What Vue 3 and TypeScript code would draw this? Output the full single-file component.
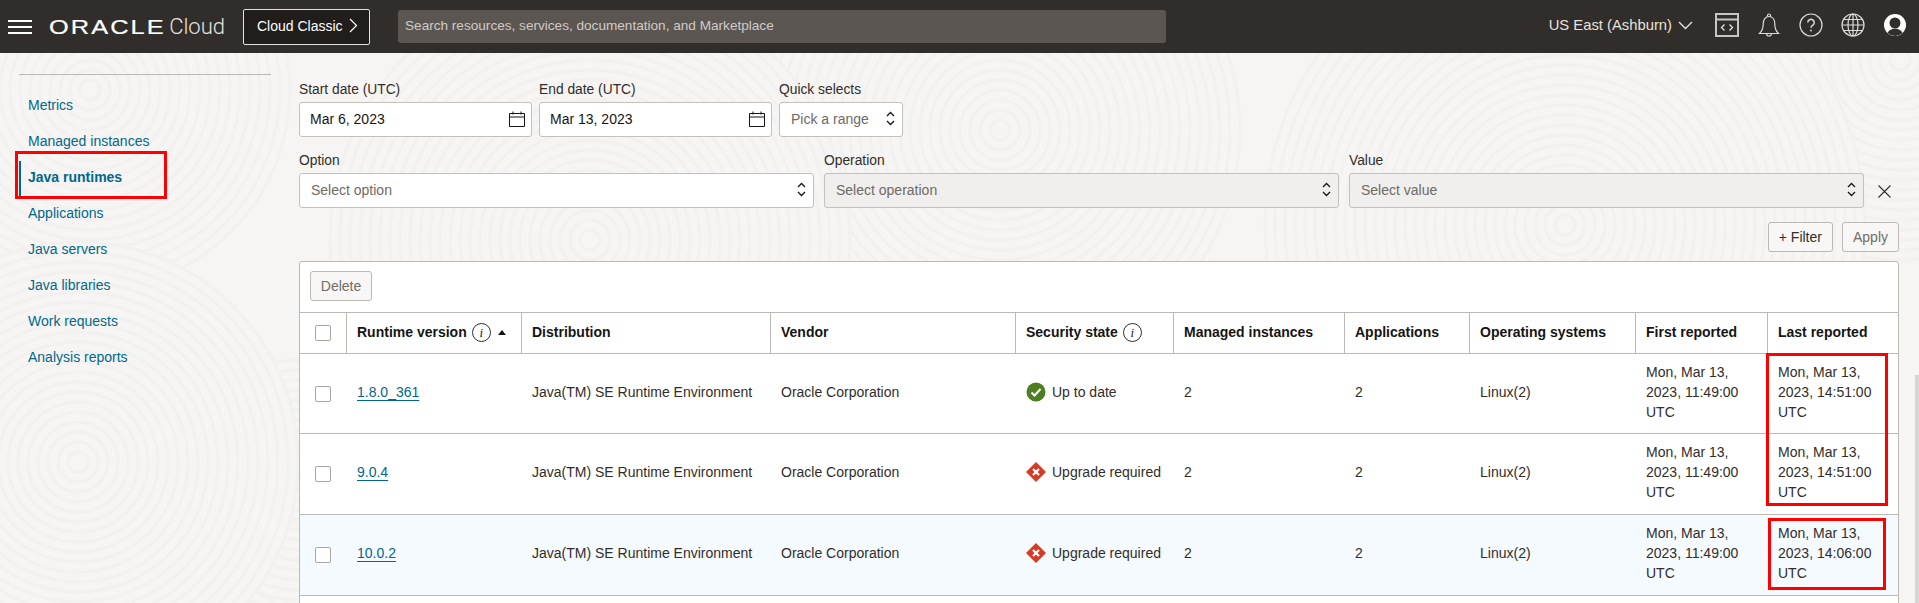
<script setup lang="ts">
interface Runtime {
  version: string
  upToDate: boolean
  last: string
  active?: boolean
}

const navItems = [
  'Metrics',
  'Managed instances',
  'Java runtimes',
  'Applications',
  'Java servers',
  'Java libraries',
  'Work requests',
  'Analysis reports',
]

const columnWidths = [47, 175, 249, 245, 158, 171, 125, 166, 132, 130]

const runtimes: Runtime[] = [
  { version: '1.8.0_361', upToDate: true, last: 'Mon, Mar 13, 2023, 14:51:00 UTC' },
  { version: '9.0.4', upToDate: false, last: 'Mon, Mar 13, 2023, 14:51:00 UTC' },
  { version: '10.0.2', upToDate: false, last: 'Mon, Mar 13, 2023, 14:06:00 UTC', active: true },
]

// overlapping fingerprint patches for the page texture, later ones cover earlier ones
const ringSets = [
  { cx: 1900, cy: 60, count: 20 },
  { cx: 1000, cy: 130, count: 24 },
  { cx: 90, cy: 90, count: 20 },
  { cx: 240, cy: 640, count: 18 },
  { cx: 300, cy: 480, count: 12 },
  { cx: 78, cy: 462, count: 22 },
  { cx: 590, cy: 240, count: 26 },
  { cx: 1565, cy: 225, count: 30 },
]
</script>

<template>
  <div class="page">
    <svg class="texture" width="1919" height="603" fill="none" stroke="#f2f1ef" stroke-width="3">
      <g v-for="set in ringSets" :key="set.cx">
        <circle :cx="set.cx" :cy="set.cy" :r="set.count * 10" fill="#f6f5f3" stroke="none" />
        <circle
          v-for="n in set.count"
          :key="n"
          :cx="set.cx"
          :cy="set.cy"
          :r="n * 10"
        />
      </g>
    </svg>

    <header class="topbar">
      <button class="burger" title="Menu"><span></span><span></span><span></span></button>
      <div class="logo">
        <span class="logo-oracle">ORACLE</span>
        <span class="logo-cloud">Cloud</span>
      </div>
      <button class="classic">
        Cloud Classic
        <svg width="9" height="15" viewBox="0 0 9 15" fill="none" stroke="#fff" stroke-width="1.2"><path d="M1 1l6.5 6.5L1 14" /></svg>
      </button>
      <div class="search">Search resources, services, documentation, and Marketplace</div>
      <div class="region">
        US East (Ashburn)
        <svg width="15" height="9" viewBox="0 0 15 9" fill="none" stroke="#e6e3df" stroke-width="1.4"><path d="M1 1l6.5 6.5L14 1" /></svg>
      </div>
      <div class="tools">
        <svg width="24" height="24" viewBox="0 0 24 24" fill="none" stroke="#c9c6c2" stroke-width="2">
          <rect x="1" y="1" width="22" height="22" />
          <path d="M1 6.5h22" />
          <path d="M9.5 11.5l-3 3 3 3M14.5 11.5l3 3-3 3" stroke="#e6e3df" stroke-width="1.3" />
        </svg>
        <svg width="24" height="24" viewBox="0 0 24 24" fill="none" stroke="#dedbd7" stroke-width="1.2">
          <path d="M2.5 20.5c2.7-2.5 3.7-5 3.7-9.500 0-4.500 2.300-7.500 5.800-7.500s5.800 3 5.800 7.500c0 4.500 1 7 3.700 9.500z" />
          <path d="M10.5 3.500v-1a1.500 1.500 0 0 1 3 0v1M9.500 20.500a2.500 2.500 0 0 0 5 0" />
        </svg>
        <svg width="24" height="24" viewBox="0 0 24 24" fill="none" stroke="#dedbd7" stroke-width="1.2">
          <circle cx="12" cy="12" r="11" />
          <path d="M8.8 9.500a3.200 3.200 0 1 1 4.800 2.800c-1 .6-1.600 1.200-1.600 2.400" stroke-width="1.5" />
          <circle cx="12" cy="17.5" r=".9" fill="#dedbd7" stroke="none" />
        </svg>
        <svg width="24" height="24" viewBox="0 0 24 24" fill="none" stroke="#dedbd7" stroke-width="1.2">
          <circle cx="12" cy="12" r="11" />
          <ellipse cx="12" cy="12" rx="5" ry="11" />
          <path d="M12 1v22M1 12h22M2.5 6.500h19M2.500 17.500h19" />
        </svg>
        <svg width="24" height="24" viewBox="0 0 24 24">
          <circle cx="12" cy="12" r="11" fill="#fff" />
          <circle cx="12" cy="10" r="5.5" fill="#312d2a" />
          <path d="M4.5 20c1.500-3 4-4.200 7.500-4.200s6 1.200 7.500 4.200a11 11 0 0 1-15 0z" fill="#312d2a" />
        </svg>
      </div>
    </header>

    <div class="body">
      <nav class="sidebar">
        <a
          v-for="item in navItems"
          :key="item"
          class="nav-item"
          :class="{ selected: item === 'Java runtimes' }"
        >{{ item }}</a>
        <div class="mark mark-nav"></div>
      </nav>

      <main class="content">
        <div class="filter-row dates">
          <label class="field date">
            <span class="field-label">Start date (UTC)</span>
            <div class="control">
              <span class="value">Mar 6, 2023</span>
              <svg width="16" height="16" viewBox="0 0 16 16" fill="none" stroke="#161513"><path d="M.5 2.5h15v13H.5zM.5 6h15M4 .5v3M12 .5v3" /></svg>
            </div>
          </label>
          <label class="field date">
            <span class="field-label">End date (UTC)</span>
            <div class="control">
              <span class="value">Mar 13, 2023</span>
              <svg width="16" height="16" viewBox="0 0 16 16" fill="none" stroke="#161513"><path d="M.5 2.5h15v13H.5zM.5 6h15M4 .5v3M12 .5v3" /></svg>
            </div>
          </label>
          <label class="field quick">
            <span class="field-label">Quick selects</span>
            <div class="control">
              <span class="placeholder">Pick a range</span>
              <svg class="updown" width="9" height="15" viewBox="0 0 9 15" fill="none" stroke="#161513" stroke-width="1.3"><path d="M1 5l3.500-3.500L8 5M1 10l3.500 3.500L8 10" /></svg>
            </div>
          </label>
        </div>

        <div class="filter-row wide">
          <label class="field">
            <span class="field-label">Option</span>
            <div class="control">
              <span class="placeholder">Select option</span>
              <svg class="updown" width="9" height="15" viewBox="0 0 9 15" fill="none" stroke="#161513" stroke-width="1.3"><path d="M1 5l3.500-3.500L8 5M1 10l3.500 3.500L8 10" /></svg>
            </div>
          </label>
          <label class="field">
            <span class="field-label">Operation</span>
            <div class="control disabled">
              <span class="placeholder">Select operation</span>
              <svg class="updown" width="9" height="15" viewBox="0 0 9 15" fill="none" stroke="#161513" stroke-width="1.3"><path d="M1 5l3.500-3.500L8 5M1 10l3.500 3.500L8 10" /></svg>
            </div>
          </label>
          <label class="field">
            <span class="field-label">Value</span>
            <div class="control disabled">
              <span class="placeholder">Select value</span>
              <svg class="updown" width="9" height="15" viewBox="0 0 9 15" fill="none" stroke="#161513" stroke-width="1.3"><path d="M1 5l3.500-3.500L8 5M1 10l3.500 3.500L8 10" /></svg>
            </div>
          </label>
          <svg class="remove" width="13" height="13" viewBox="0 0 13 13" stroke="#312d2a" stroke-width="1.1"><path d="M.5.5l12 12M12.5.5l-12 12" /></svg>
        </div>

        <div class="filter-actions">
          <button class="btn">+ Filter</button>
          <button class="btn off">Apply</button>
        </div>

        <section class="card">
          <div class="toolbar"><button class="btn off delete">Delete</button></div>
          <table>
            <colgroup>
              <col v-for="(w, i) in columnWidths" :key="i" :style="{ width: w + 'px' }" />
            </colgroup>
            <thead>
              <tr>
                <th><span class="check"></span></th>
                <th>
                  <div class="th-inner">Runtime version <i class="info">i</i><span class="sort"></span></div>
                </th>
                <th>Distribution</th>
                <th>Vendor</th>
                <th><div class="th-inner">Security state <i class="info">i</i></div></th>
                <th>Managed instances</th>
                <th>Applications</th>
                <th>Operating systems</th>
                <th>First reported</th>
                <th>Last reported</th>
              </tr>
            </thead>
            <tbody>
              <tr v-for="r in runtimes" :key="r.version" :class="{ active: r.active }">
                <td><span class="check"></span></td>
                <td><a class="link">{{ r.version }}</a></td>
                <td>Java(TM) SE Runtime Environment</td>
                <td>Oracle Corporation</td>
                <td>
                  <div class="state">
                    <svg v-if="r.upToDate" width="20" height="20" viewBox="0 0 20 20">
                      <circle cx="10" cy="10" r="9.5" fill="#4f7d21" />
                      <path d="M5.5 10.5l3 3 6-6.500" fill="none" stroke="#fff" stroke-width="2" />
                    </svg>
                    <svg v-else width="20" height="20" viewBox="0 0 20 20">
                      <path d="M10 0l10 10-10 10L0 10z" fill="#d63b25" />
                      <path d="M7 7l6 6M13 7l-6 6" stroke="#fff" stroke-width="2.2" />
                    </svg>
                    {{ r.upToDate ? 'Up to date' : 'Upgrade required' }}
                  </div>
                </td>
                <td>2</td>
                <td>2</td>
                <td>Linux(2)</td>
                <td>Mon, Mar 13, 2023, 11:49:00 UTC</td>
                <td>{{ r.last }}</td>
              </tr>
              <tr class="filler"><td colspan="10"></td></tr>
            </tbody>
          </table>
        </section>
      </main>
    </div>

    <div class="mark mark-rows"></div>
    <div class="mark mark-last"></div>
    <div class="scrollbar"></div>
  </div>
</template>

<style scoped>
.page {
  position: relative;
  height: 603px;
  overflow: hidden;
  background: #f6f5f3;
  font-family: "Liberation Sans", Arial, sans-serif;
  font-size: 14px;
  color: #312d2a;
}

.texture {
  position: absolute;
  left: 0;
  top: 0;
}

.topbar {
  position: relative;
  height: 53px;
  display: flex;
  align-items: center;
  background: #312d2a;
  color: #fff;
}

.burger {
  display: flex;
  flex-direction: column;
  gap: 4px;
  width: 24px;
  margin-left: 8px;
  padding: 0;
  border: 0;
  background: none;
}

.burger span {
  height: 2px;
  background: #fff;
}

.logo {
  display: flex;
  align-items: center;
  width: 176px;
  margin-left: 17px;
}

.logo-oracle {
  display: inline-block;
  width: 122px;
  font-size: 19.5px;
  line-height: 20px;
  letter-spacing: 1.6px;
  -webkit-text-stroke: .2px #fff;
  transform: scaleX(1.3);
  transform-origin: left center;
}

.logo-cloud {
  font-family: Roboto, sans-serif;
  font-weight: 300;
  font-size: 22px;
  color: #e6e3df;
}

.classic {
  display: flex;
  align-items: center;
  gap: 6px;
  height: 36px;
  width: 127px;
  margin-left: 18px;
  padding: 0 0 2px 13px;
  border: 1px solid #e6e3df;
  border-radius: 2px;
  background: #201d1b;
  color: #fff;
  font: inherit;
}

.search {
  width: 768px;
  height: 33px;
  line-height: 31px;
  margin-left: 28px;
  padding-left: 7px;
  box-sizing: border-box;
  border-radius: 3px;
  background: #5b5652;
  color: #cfcbc7;
  font-size: 13.6px;
}

.region {
  display: flex;
  align-items: center;
  gap: 6px;
  margin-left: auto;
  margin-bottom: 3px;
  font-size: 14.8px;
  color: #e6e3df;
}

.tools {
  display: flex;
  gap: 18px;
  margin: 0 12px 3px 22px;
}

.body {
  position: relative;
  display: flex;
}

.sidebar {
  position: relative;
  width: 252px;
  margin: 21px 28px 0 19px;
  padding-top: 12px;
  border-top: 1px solid #bcb8b3;
  box-sizing: border-box;
}

.nav-item {
  display: block;
  height: 36px;
  line-height: 36px;
  padding-left: 9px;
  color: #00688c;
}

.nav-item.selected {
  position: relative;
  font-weight: 700;
}

.nav-item.selected::before {
  content: "";
  position: absolute;
  left: 0;
  top: 2px;
  width: 2px;
  height: 36px;
  background: #00688c;
}

.mark {
  position: absolute;
  border: 3px solid #f00;
  box-sizing: border-box;
}

.mark-nav {
  left: -4px;
  top: 76px;
  width: 152px;
  height: 48px;
}

.mark-rows {
  left: 1766px;
  top: 353px;
  width: 122px;
  height: 153px;
}

.mark-last {
  left: 1768px;
  top: 518px;
  width: 118px;
  height: 72px;
}

.content {
  flex: 1;
  min-width: 0;
  padding: 27px 20px 0 0;
}

.filter-row {
  display: flex;
  gap: 7px;
  margin-bottom: 14px;
}

.filter-row.wide {
  gap: 10px;
  align-items: flex-end;
}

.filter-row.wide .field {
  width: 515px;
}

.field {
  display: block;
}

.field.date {
  width: 233px;
}

.field.quick {
  width: 124px;
}

.field-label {
  display: block;
  height: 18px;
  line-height: 18px;
  padding-top: 1px;
  margin-bottom: 3px;
  font-size: 13.8px;
  color: #312d2a;
}

.control {
  display: flex;
  align-items: center;
  justify-content: space-between;
  height: 35px;
  padding: 0 6px 2px 11px;
  box-sizing: border-box;
  border: 1px solid #c4c0bb;
  border-radius: 3px;
  background: #fff;
  color: #161513;
}

.date .control {
  padding-left: 10px;
}

.control.disabled {
  background: #f0efed;
}

.placeholder {
  color: #6f6a66;
}

.updown {
  margin-right: 1px;
}

.remove {
  margin: 0 0 10px 4px;
}

.filter-actions {
  display: flex;
  justify-content: flex-end;
  gap: 9px;
  margin-bottom: 9px;
}

.btn {
  height: 30px;
  padding: 0 10px;
  border: 1px solid #bcb8b3;
  border-radius: 3px;
  background: #f8f7f5;
  color: #312d2a;
  font: inherit;
}

.btn.off {
  color: #716c68;
}

.card {
  border: 1px solid #bcb8b3;
  border-radius: 3px 3px 0 0;
  background: #fff;
}

.toolbar {
  height: 50px;
  padding: 9px 10px;
  box-sizing: border-box;
}

.delete {
  width: 62px;
  padding: 0;
}

table {
  width: 1598px;
  table-layout: fixed;
  border-collapse: separate;
  border-spacing: 0;
}

th,
td {
  padding: 8px 10px 12px;
  text-align: left;
  line-height: 20px;
  border-bottom: 1px solid #bcb8b3;
  color: #312d2a;
  font-weight: 400;
}

th {
  height: 42px;
  box-sizing: border-box;
  padding: 0 10px 2px;
  border-top: 1px solid #bcb8b3;
  border-right: 1px solid #bcb8b3;
  font-weight: 700;
  color: #161513;
}

th:last-child {
  border-right: 0;
}

tbody tr:first-child td {
  padding-bottom: 11px;
}

tbody tr td:first-child,
th:first-child {
  padding: 0 0 0 15px;
}

tr.active td {
  background: #f5fafe;
}

.filler td {
  height: 81px;
}

.check {
  display: block;
  width: 16px;
  height: 16px;
  box-sizing: border-box;
  border: 1px solid #a8a49f;
  border-radius: 2px;
  background: #fff;
}

.th-inner {
  display: flex;
  align-items: center;
  gap: 5px;
}

.info {
  display: inline-block;
  width: 19px;
  height: 19px;
  box-sizing: border-box;
  border: 1px solid #312d2a;
  border-radius: 50%;
  text-align: center;
  font: italic 400 13px/17px "Liberation Serif", serif;
}

.sort {
  width: 0;
  height: 0;
  margin-left: 2px;
  border-left: 4.5px solid transparent;
  border-right: 4.5px solid transparent;
  border-bottom: 5px solid #161513;
}

.link {
  color: #00688c;
  text-decoration: underline;
  text-underline-offset: 3px;
}

.state {
  display: flex;
  align-items: center;
  gap: 6px;
}

.scrollbar {
  position: absolute;
  right: 0;
  top: 375px;
  bottom: 0;
  width: 4px;
  background: #d6d6d6;
}
</style>
